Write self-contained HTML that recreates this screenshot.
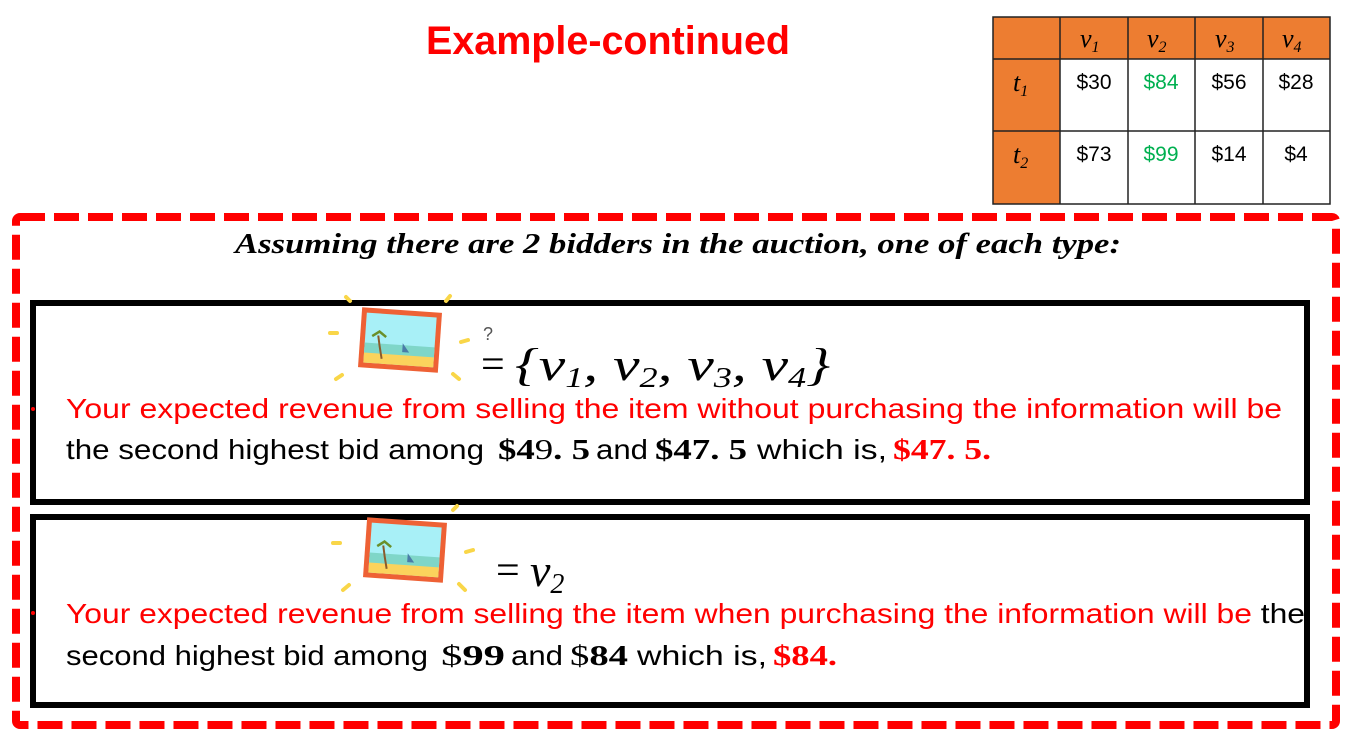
<!DOCTYPE html>
<html><head><meta charset="utf-8"><style>
html,body{margin:0;padding:0;background:#fff;width:1356px;height:751px;overflow:hidden}
svg{display:block}
text{font-family:"Liberation Sans",sans-serif}
.m{font-family:"Liberation Serif",serif;font-style:italic}
.b{font-family:"Liberation Serif",serif;font-weight:bold}
</style></head><body>
<svg width="1356" height="751" viewBox="0 0 1356 751" xmlns="http://www.w3.org/2000/svg">
<text x="426" y="54" font-size="40" font-weight="bold" fill="#ff0000" textLength="364" lengthAdjust="spacingAndGlyphs">Example-continued</text>

<g>
<rect x="993" y="17" width="337" height="42" fill="#ed7d31"/>
<rect x="993" y="59" width="67" height="145" fill="#ed7d31"/>
<g stroke="#222" stroke-width="1.5" fill="none">
<rect x="993" y="17" width="337" height="187"/>
<line x1="1060" y1="17" x2="1060" y2="204"/><line x1="1128" y1="17" x2="1128" y2="204"/>
<line x1="1195" y1="17" x2="1195" y2="204"/><line x1="1263" y1="17" x2="1263" y2="204"/>
<line x1="993" y1="59" x2="1330" y2="59"/><line x1="993" y1="131" x2="1330" y2="131"/>
</g>
<g font-size="26" class="m">
<text x="1080" y="47" class="m">v<tspan font-size="16" dy="5">1</tspan></text>
<text x="1147" y="47" class="m">v<tspan font-size="16" dy="5">2</tspan></text>
<text x="1215" y="47" class="m">v<tspan font-size="16" dy="5">3</tspan></text>
<text x="1282" y="47" class="m">v<tspan font-size="16" dy="5">4</tspan></text>
<text x="1013" y="91" class="m">t<tspan font-size="16" dy="5">1</tspan></text>
<text x="1013" y="163" class="m">t<tspan font-size="16" dy="5">2</tspan></text>
</g>
<g font-size="21" text-anchor="middle">
<text x="1094" y="89">$30</text><text x="1161" y="89" fill="#00b050">$84</text><text x="1229" y="89">$56</text><text x="1296" y="89">$28</text>
<text x="1094" y="161">$73</text><text x="1161" y="161" fill="#00b050">$99</text><text x="1229" y="161">$14</text><text x="1296" y="161">$4</text>
</g>
</g>

<rect x="16" y="217" width="1320" height="508" rx="4" fill="none" stroke="#ff0000" stroke-width="8" stroke-dasharray="25 9"/>
<text x="235" y="253" font-style="italic" font-weight="bold" font-size="29" textLength="886" lengthAdjust="spacingAndGlyphs" style="font-family:'Liberation Serif',serif">Assuming there are 2 bidders in the auction, one of each type:</text>

<rect x="33" y="303" width="1274" height="199" fill="none" stroke="#000" stroke-width="6"/>
<rect x="33" y="517" width="1274" height="188" fill="none" stroke="#000" stroke-width="6"/>

<g>
<g stroke="#f9d648" stroke-width="4" stroke-linecap="round">
<line x1="346" y1="297" x2="350" y2="301"/><line x1="446" y1="301" x2="450" y2="296"/>
<line x1="330" y1="333" x2="337" y2="333"/><line x1="461" y1="342" x2="468" y2="340"/>
<line x1="336" y1="379" x2="342" y2="375"/><line x1="453" y1="374" x2="459" y2="379"/>
</g>
<g transform="rotate(4 400 340)">
<rect x="360" y="310" width="80" height="60" fill="#ee6135"/>
<rect x="365" y="315" width="70" height="50" fill="#a8f0f7"/>
<rect x="365" y="345" width="70" height="12" fill="#7fd6c8"/>
<rect x="365" y="355" width="70" height="10" fill="#fbd35c"/>
<path d="M378 337 Q380 348 383 360" stroke="#8a5a2b" stroke-width="2" fill="none"/>
<path d="M372 338 L379 333 L386 338" stroke="#6a8f2a" stroke-width="2.5" fill="none"/>
<path d="M403 343 L403 352 L410 352 Z" fill="#4a7ca8"/>
</g>
<text x="483" y="340" font-size="18" fill="#555">?</text>
</g>
<text x="481" y="378" font-size="42" style="font-family:'Liberation Serif',serif">=</text>
<text x="515" y="380" font-size="46" class="m" textLength="315" lengthAdjust="spacingAndGlyphs">{v<tspan font-size="28" dy="7">1</tspan><tspan dy="-7">, v</tspan><tspan font-size="28" dy="7">2</tspan><tspan dy="-7">, v</tspan><tspan font-size="28" dy="7">3</tspan><tspan dy="-7">, v</tspan><tspan font-size="28" dy="7">4</tspan><tspan dy="-7">}</tspan></text>

<circle cx="33" cy="409" r="2" fill="#ff0000"/>
<text x="66" y="418" font-size="28" fill="#ff0000" textLength="1216" lengthAdjust="spacingAndGlyphs">Your expected revenue from selling the item without purchasing the information will be</text>
<text x="66" y="459" font-size="28" fill="#000" textLength="418" lengthAdjust="spacingAndGlyphs">the second highest bid among</text>
<text x="498" y="459" font-size="29" textLength="92" lengthAdjust="spacingAndGlyphs"><tspan class="b">$4</tspan><tspan style="font-family:'Liberation Serif',serif">9</tspan><tspan class="b">. 5</tspan></text>
<text x="596" y="459" font-size="28" textLength="52" lengthAdjust="spacingAndGlyphs">and</text>
<text x="655" y="459" font-size="29" class="b" textLength="92" lengthAdjust="spacingAndGlyphs">$47. 5</text>
<text x="757" y="459" font-size="28" textLength="130" lengthAdjust="spacingAndGlyphs">which  is,</text>
<text x="893" y="459" font-size="29" class="b" fill="#ff0000" textLength="98" lengthAdjust="spacingAndGlyphs">$47. 5.</text>

<g>
<g stroke="#f9d648" stroke-width="4" stroke-linecap="round">
<line x1="333" y1="543" x2="340" y2="543"/><line x1="466" y1="552" x2="473" y2="550"/>
<line x1="343" y1="590" x2="349" y2="585"/><line x1="459" y1="584" x2="465" y2="590"/>
<line x1="453" y1="510" x2="457" y2="506"/>
</g>
<g transform="rotate(4 405 550)">
<rect x="365" y="520" width="80" height="60" fill="#ee6135"/>
<rect x="370" y="525" width="70" height="50" fill="#a8f0f7"/>
<rect x="370" y="555" width="70" height="12" fill="#7fd6c8"/>
<rect x="370" y="565" width="70" height="10" fill="#fbd35c"/>
<path d="M383 547 Q385 558 388 570" stroke="#8a5a2b" stroke-width="2" fill="none"/>
<path d="M377 548 L384 543 L391 548" stroke="#6a8f2a" stroke-width="2.5" fill="none"/>
<path d="M408 553 L408 562 L415 562 Z" fill="#4a7ca8"/>
</g>
</g>
<text x="496" y="584" font-size="42" style="font-family:'Liberation Serif',serif">=</text>
<text x="530" y="586" font-size="46" class="m">v<tspan font-size="28" dy="7">2</tspan></text>

<circle cx="33" cy="613" r="2" fill="#ff0000"/>
<text x="66" y="623" font-size="28" textLength="1239" lengthAdjust="spacingAndGlyphs"><tspan fill="#ff0000">Your expected revenue from selling the item when purchasing the information will be</tspan> the</text>
<text x="66" y="665" font-size="28" textLength="362" lengthAdjust="spacingAndGlyphs">second highest bid among</text>
<text x="441" y="665" font-size="29" textLength="64" lengthAdjust="spacingAndGlyphs"><tspan style="font-family:'Liberation Serif',serif">$</tspan><tspan class="b">99</tspan></text>
<text x="511" y="665" font-size="28" textLength="52" lengthAdjust="spacingAndGlyphs">and</text>
<text x="570" y="665" font-size="29" textLength="58" lengthAdjust="spacingAndGlyphs"><tspan style="font-family:'Liberation Serif',serif">$</tspan><tspan class="b">84</tspan></text>
<text x="637" y="665" font-size="28" textLength="130" lengthAdjust="spacingAndGlyphs">which  is,</text>
<text x="773" y="665" font-size="29" class="b" fill="#ff0000" textLength="64" lengthAdjust="spacingAndGlyphs">$84.</text>
</svg>
</body></html>
